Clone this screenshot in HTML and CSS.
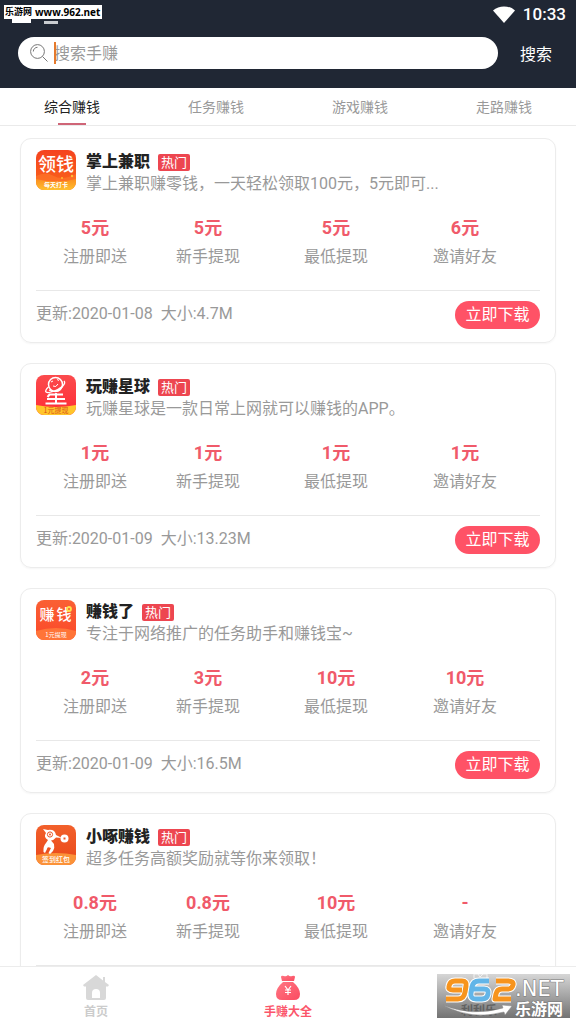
FILE: index.html
```html
<!DOCTYPE html>
<html lang="zh-CN">
<head>
<meta charset="utf-8">
<meta name="viewport" content="width=device-width, initial-scale=1">
<title>手赚大全</title>
<link rel="stylesheet" href="styles.css">
</head>
<body>
<div class="app">
  <header class="header">
    <div class="status">
      <svg class="wifi" viewBox="0 0 22 17" aria-hidden="true"><path d="M0 4.500C6-1 16-1 22 4.500L11 17Z"/></svg>
      <span class="clock">10:33</span>
    </div>
    <form class="search">
      <div class="search-box">
        <svg class="search-icon" viewBox="0 0 18 18" aria-hidden="true"><circle cx="7.500" cy="7.500" r="6.900"/><path d="M12.500 12.500L17.500 17.500M3.300 7.500A4.200 4.200 0 0 1 7.500 3.300"/></svg>
        <input class="search-input" type="text" placeholder="搜索手赚" aria-label="搜索手赚">
        <span class="caret"></span>
      </div>
      <button class="search-button" type="button">搜索</button>
    </form>
    <div class="site-tag">
      <b>乐游网</b><b class="site-url">www.962.net</b>
    </div>
    <span class="notice notice-wide"></span>
    <span class="notice notice-slim"></span>
  </header>

  <nav class="tabs">
    <a class="tab tab-active" href="#all">综合赚钱</a>
    <a class="tab" href="#task">任务赚钱</a>
    <a class="tab" href="#game">游戏赚钱</a>
    <a class="tab" href="#walk">走路赚钱</a>
  </nav>

  <main class="list">
    <article class="card">
      <div class="card-head">
        <svg class="app-icon" viewBox="0 0 40 40" aria-hidden="true">
          <defs>
            <linearGradient id="g1" x2="0" y2="1"><stop offset="0" stop-color="#f5431f"/><stop offset="1" stop-color="#fa661b"/></linearGradient>
            <linearGradient id="g2" x2="0" y2="1"><stop offset="0" stop-color="#fb8d20"/><stop offset="1" stop-color="#ffc02d"/></linearGradient>
            <clipPath id="rounded"><rect width="40" height="40" rx="8"/></clipPath>
          </defs>
          <g clip-path="url(#rounded)">
            <path fill="url(#g1)" d="M0 0H40V40H0Z"/>
            <path fill="#ff792c" d="M0 26Q10 21 18 26T40 24V32H0Z" opacity=".6"/>
            <path fill="url(#g2)" d="M0 29Q20 34 40 29V40H0Z"/>
            <circle cx="26" cy="28" r="1" fill="#ffbd35"/><circle cx="36" cy="26" r="1.200" fill="#ffbd35"/>
          </g>
          <text class="icon-text icon-medium" x="20" y="21" font-size="18">领钱</text>
          <text class="icon-text icon-bold" x="20" y="37" font-size="6">每天打卡</text>
        </svg>
        <div class="card-info">
          <div class="card-title"><h2 class="name">掌上兼职</h2><span class="hot">热门</span></div>
          <p class="desc">掌上兼职赚零钱，一天轻松领取100元，5元即可...</p>
        </div>
      </div>
      <dl class="stats">
        <div class="stat"><dt class="label">注册即送</dt><dd class="value">5元</dd></div>
        <div class="stat"><dt class="label">新手提现</dt><dd class="value">5元</dd></div>
        <div class="stat"><dt class="label">最低提现</dt><dd class="value">5元</dd></div>
        <div class="stat"><dt class="label">邀请好友</dt><dd class="value">6元</dd></div>
      </dl>
      <div class="card-foot"><span class="meta">更新:2020-01-08</span><span class="meta">大小:4.7M</span><button class="download" type="button">立即下载</button></div>
    </article>

    <article class="card">
      <div class="card-head">
        <svg class="app-icon" viewBox="0 0 40 40" aria-hidden="true">
          <defs><linearGradient id="g3" x2="0" y2="1"><stop offset="0" stop-color="#fb4b4d"/><stop offset="1" stop-color="#ff2b35"/></linearGradient></defs>
          <g clip-path="url(#rounded)">
            <path fill="url(#g3)" d="M0 0H40V40H0Z"/>
            <path fill="#ffc52b" d="M0 30Q20 34 40 30V40H0Z"/>
          </g>
          <g fill="none" stroke="#fff" stroke-width="1.500">
            <circle cx="19.500" cy="9.500" r="7"/>
            <path d="M12.500 12C7 17 10 19 17 16.500S31 9 28 6M13 15Q20 19 27 11" stroke-width="1.300"/>
            <path d="M15 7l2-1M21 4.500l2 1M17 11q3 2 5-2" stroke-width="1"/>
            <path d="M13 19.500H27M11 24H29M9.500 28.500H30.500M20 18V28.500M14 19L11.500 22" stroke-width="2"/>
          </g>
          <text class="icon-text" x="20" y="38" font-size="7" fill="#e8522a">1元提现</text>
        </svg>
        <div class="card-info">
          <div class="card-title"><h2 class="name">玩赚星球</h2><span class="hot">热门</span></div>
          <p class="desc">玩赚星球是一款日常上网就可以赚钱的APP。</p>
        </div>
      </div>
      <dl class="stats">
        <div class="stat"><dt class="label">注册即送</dt><dd class="value">1元</dd></div>
        <div class="stat"><dt class="label">新手提现</dt><dd class="value">1元</dd></div>
        <div class="stat"><dt class="label">最低提现</dt><dd class="value">1元</dd></div>
        <div class="stat"><dt class="label">邀请好友</dt><dd class="value">1元</dd></div>
      </dl>
      <div class="card-foot"><span class="meta">更新:2020-01-09</span><span class="meta">大小:13.23M</span><button class="download" type="button">立即下载</button></div>
    </article>

    <article class="card">
      <div class="card-head">
        <svg class="app-icon" viewBox="0 0 40 40" aria-hidden="true">
          <defs><linearGradient id="g4" x2="0" y2="1"><stop offset="0" stop-color="#fa6034"/><stop offset="1" stop-color="#fb4829"/></linearGradient></defs>
          <g clip-path="url(#rounded)">
            <path fill="url(#g4)" d="M0 0H40V40H0Z"/>
            <path fill="#ff7438" d="M0 31Q20 25 40 31V40H0Z"/>
          </g>
          <text class="icon-text icon-medium" x="11" y="20" font-size="15">赚</text>
          <text class="icon-text icon-medium" x="28" y="20" font-size="15">钱</text>
          <circle cx="33" cy="9" r="2" fill="#fa6034" stroke="#ffe04a" stroke-width="1.800"/>
          <text class="icon-text" x="20" y="37" font-size="6">1元提现</text>
        </svg>
        <div class="card-info">
          <div class="card-title"><h2 class="name">赚钱了</h2><span class="hot">热门</span></div>
          <p class="desc">专注于网络推广的任务助手和赚钱宝~</p>
        </div>
      </div>
      <dl class="stats">
        <div class="stat"><dt class="label">注册即送</dt><dd class="value">2元</dd></div>
        <div class="stat"><dt class="label">新手提现</dt><dd class="value">3元</dd></div>
        <div class="stat"><dt class="label">最低提现</dt><dd class="value">10元</dd></div>
        <div class="stat"><dt class="label">邀请好友</dt><dd class="value">10元</dd></div>
      </dl>
      <div class="card-foot"><span class="meta">更新:2020-01-09</span><span class="meta">大小:16.5M</span><button class="download" type="button">立即下载</button></div>
    </article>

    <article class="card">
      <div class="card-head">
        <svg class="app-icon" viewBox="0 0 40 40" aria-hidden="true">
          <defs><linearGradient id="g5" x2="0" y2="1"><stop offset="0" stop-color="#f2602b"/><stop offset="1" stop-color="#e94719"/></linearGradient></defs>
          <g clip-path="url(#rounded)">
            <path fill="url(#g5)" d="M0 0H40V40H0Z"/>
            <path fill="#fb9238" d="M0 30Q20 26 40 30V40H0Z"/>
          </g>
          <path fill="#fff" d="M7 4L12 5Q19 4 20 10L26 13L20 12.500Q18 15 15 15.500L18 19Q19 23 17 26L14 29L12.500 28L15 23Q11 21 11 24L9 28L7.500 27Q7 21 10 18L12 15Q7 12 10 8Z"/>
          <circle cx="14" cy="9.500" r="2.600" fill="#fff" stroke="#ed5424"/><circle cx="14" cy="9.500" r="1" fill="#ed5424"/>
          <circle cx="28.500" cy="13.500" r="4" fill="#fff"/><path fill="#ed5424" d="M27.500 12.500H29.500V14.500H27.500Z"/>
          <text class="icon-text icon-medium" x="20" y="37" font-size="7">签到红包</text>
        </svg>
        <div class="card-info">
          <div class="card-title"><h2 class="name">小啄赚钱</h2><span class="hot">热门</span></div>
          <p class="desc">超多任务高额奖励就等你来领取！</p>
        </div>
      </div>
      <dl class="stats">
        <div class="stat"><dt class="label">注册即送</dt><dd class="value">0.8元</dd></div>
        <div class="stat"><dt class="label">新手提现</dt><dd class="value">0.8元</dd></div>
        <div class="stat"><dt class="label">最低提现</dt><dd class="value">10元</dd></div>
        <div class="stat"><dt class="label">邀请好友</dt><dd class="value">-</dd></div>
      </dl>
      <div class="card-foot"></div>
    </article>
  </main>

  <nav class="bottom">
    <a class="bottom-item" href="#home">
      <svg class="bottom-icon" viewBox="0 0 26 26" aria-hidden="true"><path fill="#d8d8d8" d="M13 0L20 5.500V2H22V7L26 10L25 11.500H23V23Q23 25 21 25H5Q3 25 3 23V11.500H1L0 10Z"/><path fill="#fff" d="M9 23V18a4 4 0 0 1 8 0V23Z"/></svg>
      <span>首页</span>
    </a>
    <a class="bottom-item bottom-active" href="#all">
      <svg class="bottom-icon" viewBox="0 0 26 26" aria-hidden="true">
        <defs><linearGradient id="bag" x2="1" y2="1"><stop offset="0" stop-color="#ff7783"/><stop offset="1" stop-color="#fb4b61"/></linearGradient></defs>
        <path fill="url(#bag)" d="M7 6L6 2Q6 0 9 1Q11 2 13 0Q15 2 17 1Q20 0 20 2L19 6Z"/>
        <path fill="url(#bag)" d="M8 7H18Q25 13 25 19Q25 25 19 25H7Q1 25 1 19Q1 13 8 7Z"/>
        <path fill="none" stroke="#fff" stroke-width="1.200" d="M10 11L13 15L16 11M13 15V20M10 15H16M10 17.500H16"/>
      </svg>
      <span>手赚大全</span>
    </a>
    <span class="bottom-item"></span>
    <svg class="watermark" viewBox="0 0 133 44" role="img" aria-label="962.NET 乐游网">
      <defs><linearGradient id="metal" x2="0" y2="1"><stop offset="0" stop-color="#d6d6d6"/><stop offset="1" stop-color="#737373"/></linearGradient></defs>
      <path fill="url(#metal)" d="M0 0H133V44H0Z"/>
      <path fill="none" stroke="#f2f2f2" d="M37 4V0H50V4M41 0L43 3L46 0"/>
      <text class="mark-shadow" x="24" y="41" font-size="12">利利乐</text>
      <g fill="none" stroke-linejoin="round">
        <g stroke="#fff" stroke-width="7">
          <path d="M25 16H16Q11 16 12 12Q13 7 18 7H25Q30 7 29 12L28 18Q27 25 21 25H9"/>
          <path d="M52 7H42Q36 7 35 13L34 19Q33 25 39 25H45Q50 25 51 20Q52 15 47 15H36"/>
          <path d="M59 7H71Q77 7 76 11Q75 15 71 15H65Q60 15 59 20L58 25H74"/>
        </g>
        <g stroke="#f7941d" stroke-width="5">
          <path d="M25 16H16Q11 16 12 12Q13 7 18 7H25Q30 7 29 12L28 18Q27 25 21 25H9"/>
          <path stroke="#62b5e8" d="M52 7H42Q36 7 35 13L34 19Q33 25 39 25H45Q50 25 51 20Q52 15 47 15H36"/>
          <path d="M59 7H71Q77 7 76 11Q75 15 71 15H65Q60 15 59 20L58 25H74"/>
        </g>
      </g>
      <path fill="#fff" stroke="#888" stroke-width=".500" d="M6 31Q35 43 66 34L65 31L75 32L68 41L67 38Q35 47 6 31Z"/>
      <text class="mark-text mark-net" x="78" y="22" font-size="21">.NET</text>
      <text class="mark-text" x="78" y="41" font-size="16">乐游网</text>
    </svg>
  </nav>
</div>
</body>
</html>
```
FILE: styles.css
```css
* {
  box-sizing: border-box;
}

body,
h2,
p,
dl,
dd {
  margin: 0;
}

body {
  background: #fff;
  color: #999;
  font-family: Roboto, "Noto Sans CJK SC", sans-serif;
  font-size: 16px;
}

a {
  color: inherit;
  text-decoration: none;
}

button,
input {
  border: 0;
  padding: 0;
  font: inherit;
}

.app {
  display: flex;
  flex-direction: column;
  height: 100vh;
  overflow: hidden;
}

.header {
  position: relative;
  padding: 3px 10px 19px 18px;
  background: #202734;
  color: #fff;
}

.status {
  display: flex;
  justify-content: flex-end;
  align-items: center;
  gap: 8px;
  height: 22px;
  margin-bottom: 12px;
}

.wifi {
  width: 22px;
  height: 17px;
  fill: #fff;
}

.clock {
  font-size: 17px;
  font-weight: 500;
}

.search {
  display: flex;
  align-items: center;
  gap: 22px;
}

.search-box {
  position: relative;
  display: flex;
  flex: 1;
  align-items: center;
  gap: 5px;
  height: 32px;
  padding: 0 12px;
  border-radius: 16px;
  background: #fff;
}

.search-icon {
  width: 18px;
  height: 18px;
  fill: none;
  stroke: #777;
  stroke-width: 1;
}

.search-input {
  flex: 1;
  min-width: 0;
  height: 24px;
  padding-left: 1px;
  background: none;
  outline: 0;
}

.search-input::placeholder {
  color: #999;
}

.caret {
  position: absolute;
  top: 5px;
  left: 36px;
  width: 2px;
  height: 22px;
  background: #e57a2d;
}

.search-button {
  width: 32px;
  margin-right: 14px;
  background: none;
  color: #fff;
  white-space: nowrap;
}

.site-tag {
  position: absolute;
  z-index: 1;
  top: 5px;
  left: 4px;
  display: flex;
  gap: 3px;
  height: 14px;
  padding: 0 2px 0 1px;
  background: #fff;
  color: #000;
  font-size: 9px;
  line-height: 15px;
  white-space: nowrap;
}

.site-url {
  font-family: "Open Sans", sans-serif;
  font-size: 10px;
}

.notice {
  position: absolute;
  left: 12px;
  top: 19px;
  width: 19px;
  height: 4px;
  background: #fff;
}

.notice-slim {
  left: 44px;
  top: 21px;
  width: 14px;
  height: 3px;
  background: #c9ccd0;
}

.tabs {
  display: grid;
  grid-template-columns: repeat(4, 1fr);
  border-bottom: 1px solid #eaeaea;
  font-size: 14px;
  line-height: 37px;
  text-align: center;
}

.tab {
  position: relative;
  height: 37px;
  padding-top: 1px;
}

.tab-active {
  color: #222;
}

.tab-active::after {
  position: absolute;
  bottom: 0;
  left: 50%;
  width: 28px;
  height: 2px;
  margin-left: -14px;
  background: #cf6577;
  content: "";
}

.list {
  display: flex;
  flex: 1;
  flex-direction: column;
  gap: 20px;
  min-height: 0;
  padding: 12px 20px 0;
  overflow: hidden;
}

.card {
  flex: none;
  padding: 11px 15px 13px;
  border: 1px solid #ececec;
  border-radius: 11px;
  box-shadow: 0 1px 2px rgba(0, 0, 0, 0.04);
}

.card-head {
  display: flex;
  gap: 10px;
}

.app-icon {
  flex: none;
  width: 40px;
  height: 40px;
}

.icon-text {
  fill: #fff;
  font-family: "Noto Sans CJK SC", sans-serif;
  text-anchor: middle;
}

.icon-text[fill] {
  fill: #d95119;
}

.icon-medium {
  font-weight: 500;
}

.icon-bold {
  font-weight: 700;
}

.card-info {
  min-width: 0;
}

.card-title {
  display: flex;
  align-items: center;
  gap: 8px;
  height: 20px;
}

.name {
  color: #222;
  font-size: 16px;
  font-weight: 900;
}

.hot {
  height: 17px;
  padding: 0 3px;
  margin-top: 4px;
  border-radius: 2px;
  background: #ed4650;
  color: #fff;
  font-size: 13px;
  line-height: 17px;
}

.desc {
  padding-top: 3px;
  line-height: 22px;
  white-space: nowrap;
}

.stats {
  display: grid;
  grid-template-columns: 118fr 108fr 148fr 110fr;
  margin-top: 21px;
  padding-right: 20px;
  text-align: center;
}

.stat {
  display: flex;
  flex-direction: column-reverse;
  gap: 5px;
}

.value {
  color: #f05a6a;
  font-size: 18px;
  font-weight: 700;
  line-height: 24px;
}

.label {
  line-height: 24px;
  white-space: nowrap;
}

.card-foot {
  display: flex;
  align-items: flex-start;
  gap: 8px;
  min-height: 39px;
  margin-top: 21px;
  padding-top: 10px;
  border-top: 1px solid #e8e8e8;
}

.meta {
  line-height: 26px;
}

.download {
  min-width: 85px;
  height: 28px;
  margin-left: auto;
  padding: 0 10px;
  border-radius: 14px;
  background: #ff5266;
  color: #fff;
  line-height: 28px;
}

.bottom {
  position: relative;
  display: grid;
  grid-template-columns: repeat(3, 1fr);
  height: 58px;
  padding-top: 8px;
  border-top: 1px solid #ececec;
  background: #fff;
  color: #ccc;
  font-size: 12px;
  font-weight: 700;
}

.bottom-item {
  display: flex;
  flex-direction: column;
  align-items: center;
  gap: 3px;
  line-height: 16px;
}

.bottom-icon {
  width: 26px;
  height: 26px;
}

.bottom-active {
  color: #fb566b;
}

.watermark {
  position: absolute;
  right: 6px;
  bottom: 6px;
  width: 133px;
  height: 44px;
}

.mark-text {
  fill: #fff;
  stroke: #777;
  stroke-width: 1;
  paint-order: stroke;
  font-family: "Noto Sans CJK SC", sans-serif;
  font-weight: 700;
}

.mark-net {
  font-family: "DejaVu Sans", sans-serif;
  font-weight: 400;
}

.mark-shadow {
  fill: #606060;
  font-weight: 700;
}
```
